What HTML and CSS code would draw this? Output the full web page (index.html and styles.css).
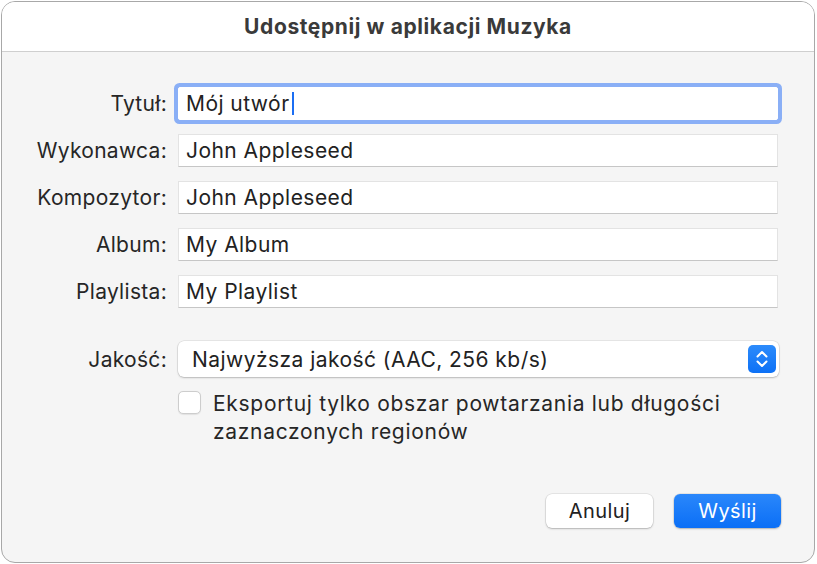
FILE: index.html
```html
<!DOCTYPE html>
<html lang="pl">
<head>
    <meta charset="UTF-8">
    <title>Udostępnij w aplikacji Muzyka</title>
    <link rel="stylesheet" href="styles.css">
</head>
<body>
    <div class="window">
        <div class="titlebar">Udostępnij w aplikacji Muzyka</div>
        <div class="content">
            <div class="form">
                <label class="label">Tytuł:</label>
                <div class="field focused"><span>Mój utwór</span><span class="caret"></span></div>
                <label class="label">Wykonawca:</label>
                <div class="field">John Appleseed</div>
                <label class="label">Kompozytor:</label>
                <div class="field">John Appleseed</div>
                <label class="label">Album:</label>
                <div class="field">My Album</div>
                <label class="label">Playlista:</label>
                <div class="field">My Playlist</div>

                <label class="label quality-label">Jakość:</label>
                <div class="popup">
                    <span>Najwyższa jakość (AAC, 256 kb/s)</span>
                    <span class="stepper">
                        <svg width="14" height="20" viewBox="0 0 14 20">
                            <path d="M2.5 7.5 L7 3 L11.5 7.5" fill="none" stroke="#fff" stroke-width="2" stroke-linecap="round" stroke-linejoin="round"/>
                            <path d="M2.5 12.5 L7 17 L11.5 12.5" fill="none" stroke="#fff" stroke-width="2" stroke-linecap="round" stroke-linejoin="round"/>
                        </svg>
                    </span>
                </div>

                <div></div>
                <div class="check-row">
                    <span class="checkbox"></span>
                    <span class="check-text">Eksportuj tylko obszar powtarzania lub długości zaznaczonych regionów</span>
                </div>
            </div>
            <div class="buttons">
                <button class="btn">Anuluj</button>
                <button class="btn primary">Wyślij</button>
            </div>
        </div>
    </div>
</body>
</html>
```

FILE: styles.css
```css
body {
    margin: 0;
    background: #fff;
    font-family: 'Inter', 'Noto Sans', sans-serif;
    color: #262626;
}
.window {
    box-sizing: border-box;
    margin: 1px;
    width: 814px;
    height: 562px;
    border: 1px solid #a8a8a8;
    border-radius: 14px;
    overflow: hidden;
    background: #f5f5f5;
    display: flex;
    flex-direction: column;
}
.titlebar {
    height: 49px;
    background: #fff;
    border-bottom: 1px solid #cfcfcf;
    display: flex;
    align-items: center;
    justify-content: center;
    font-size: 21px;
    font-weight: 700;
    color: #3a3a3a;
    letter-spacing: 0.6px;
}
.content {
    flex: 1;
    padding: 35px 33px 0 0;
    font-size: 21px;
    letter-spacing: 0.45px;
}
.form {
    display: grid;
    grid-template-columns: 165px 600px;
    column-gap: 11px;
    row-gap: 14px;
    align-items: center;
}
.label {
    text-align: right;
    color: #262626;
    letter-spacing: 0.3px;
}
.field {
    box-sizing: border-box;
    height: 33px;
    background: #fff;
    border: 1px solid #e3e3e3;
    border-bottom-color: #c6c6c6;
    padding: 0 7px;
    display: flex;
    align-items: center;
    color: #222;
}
.field.focused {
    border-color: #fff;
    border-radius: 2px;
    box-shadow: 0 0 0 4px #8aaff6;
}
.caret {
    display: inline-block;
    width: 2px;
    height: 23px;
    background: #1b6ef3;
    margin-left: 2px;
}
.quality-label {
    margin-top: 19px;
}
.popup {
    box-sizing: border-box;
    margin-top: 19px;
    height: 36px;
    background: #fff;
    border-radius: 6px;
    box-shadow: 0 0 0 0.5px rgba(0, 0, 0, 0.12), 0 1px 2px rgba(0, 0, 0, 0.2);
    display: flex;
    align-items: center;
    justify-content: space-between;
    padding: 0 3px 0 14px;
    color: #222;
    width: 601px;
}
.stepper {
    width: 28px;
    height: 28px;
    border-radius: 5px;
    background: linear-gradient(#2c8bfb, #0d71f6);
    display: flex;
    align-items: center;
    justify-content: center;
}
.check-row {
    display: flex;
    align-items: flex-start;
    gap: 12px;
    margin-top: -1px;
}
.checkbox {
    flex: none;
    box-sizing: border-box;
    width: 23px;
    height: 23px;
    margin-top: 1px;
    background: #fff;
    border: 1px solid #cdcdcd;
    border-radius: 5px;
    box-shadow: 0 0.5px 1px rgba(0, 0, 0, 0.08);
}
.check-text {
    line-height: 28px;
    color: #262626;
    letter-spacing: 0.7px;
    max-width: 560px;
}
.buttons {
    display: flex;
    justify-content: flex-end;
    gap: 21px;
    margin-top: 48px;
}
.btn {
    width: 107px;
    height: 34px;
    border: none;
    border-radius: 6px;
    font-family: inherit;
    font-size: 20px;
    letter-spacing: 0.4px;
    color: #222;
    background: #fff;
    box-shadow: 0 0 0 0.5px rgba(0, 0, 0, 0.12), 0 1px 2px rgba(0, 0, 0, 0.22);
}
.btn.primary {
    color: #fff;
    background: linear-gradient(#2a87fb, #0b6ff6);
}
```
